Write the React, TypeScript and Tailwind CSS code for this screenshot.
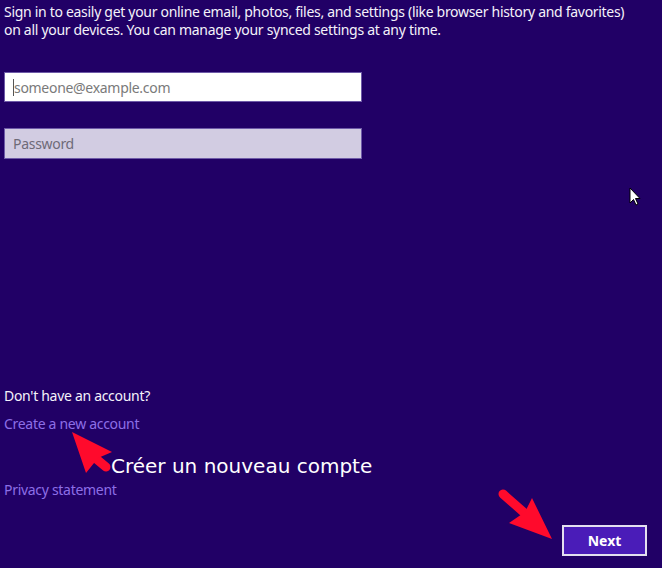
import React from 'react';

const Arrow = ({ points, tail }: { points: string; tail: [number, number, number, number] }) => (
  <>
    <line x1={tail[0]} y1={tail[1]} x2={tail[2]} y2={tail[3]} stroke="#ff0a2c" strokeWidth={9} strokeLinecap="round" />
    <polygon points={points} fill="#ff0a2c" />
  </>
);

const App = () => {
  return (
    <div className="relative w-[662px] h-[568px] overflow-hidden bg-[#210066] text-white font-['Noto_Sans',sans-serif] tracking-[-0.3px]">
      <div className="flex flex-col px-1 pt-[3px]">
        <p className="text-[14px] leading-[18px] text-[#f4f2fa]">
          Sign in to easily get your online email, photos, files, and settings (like browser history and favorites)
          <br />
          on all your devices. You can manage your synced settings at any time.
        </p>

        <div className="mt-[33px] w-[358px] h-[30px] bg-white border border-[#6e5aa8] flex items-center px-2">
          <span className="w-px h-[17px] bg-[#555]" />
          <span className="text-[14px] text-[#7a7a7a]">someone@example.com</span>
        </div>

        <div className="mt-[26px] w-[358px] h-[31px] bg-[#d2cce2] border border-[#6e5aa8] flex items-center px-2">
          <span className="text-[14px] text-[#6e6a78]">Password</span>
        </div>

        <div className="mt-[228px] flex flex-col text-[14px] leading-[18px]">
          <span className="text-[#f4f2fa]">Don't have an account?</span>
          <span className="mt-[10px] text-[#8d6fe6]">Create a new account</span>
          <span className="mt-[48px] text-[#8d6fe6]">Privacy statement</span>
        </div>
      </div>

      <div className="absolute left-[562px] top-[525px] w-[85px] h-[31px] border-2 border-[#e4e0f0] bg-[#4a1cb8] flex items-center justify-center">
        <span className="text-[14px] font-bold text-white tracking-normal">Next</span>
      </div>

      <span className="absolute left-[111px] top-[453px] text-[20px] leading-[26px] text-white tracking-normal font-['DejaVu_Sans',sans-serif]">
        Créer un nouveau compte
      </span>

      <svg className="absolute left-0 top-0" width="662" height="568" viewBox="0 0 662 568">
        <Arrow points="72,432 112,452 98,458 86,473" tail={[94, 457, 106, 467]} />
        <Arrow points="552,539 532,498 525,512 509,523" tail={[503, 494, 528, 516]} />
        <path d="M630 188 L630 203 L633.5 199.5 L636 205 L638 204 L635.5 198.5 L640 198.5 Z" fill="#fff" stroke="#000" strokeWidth={1} />
      </svg>
    </div>
  );
};

export default App;
